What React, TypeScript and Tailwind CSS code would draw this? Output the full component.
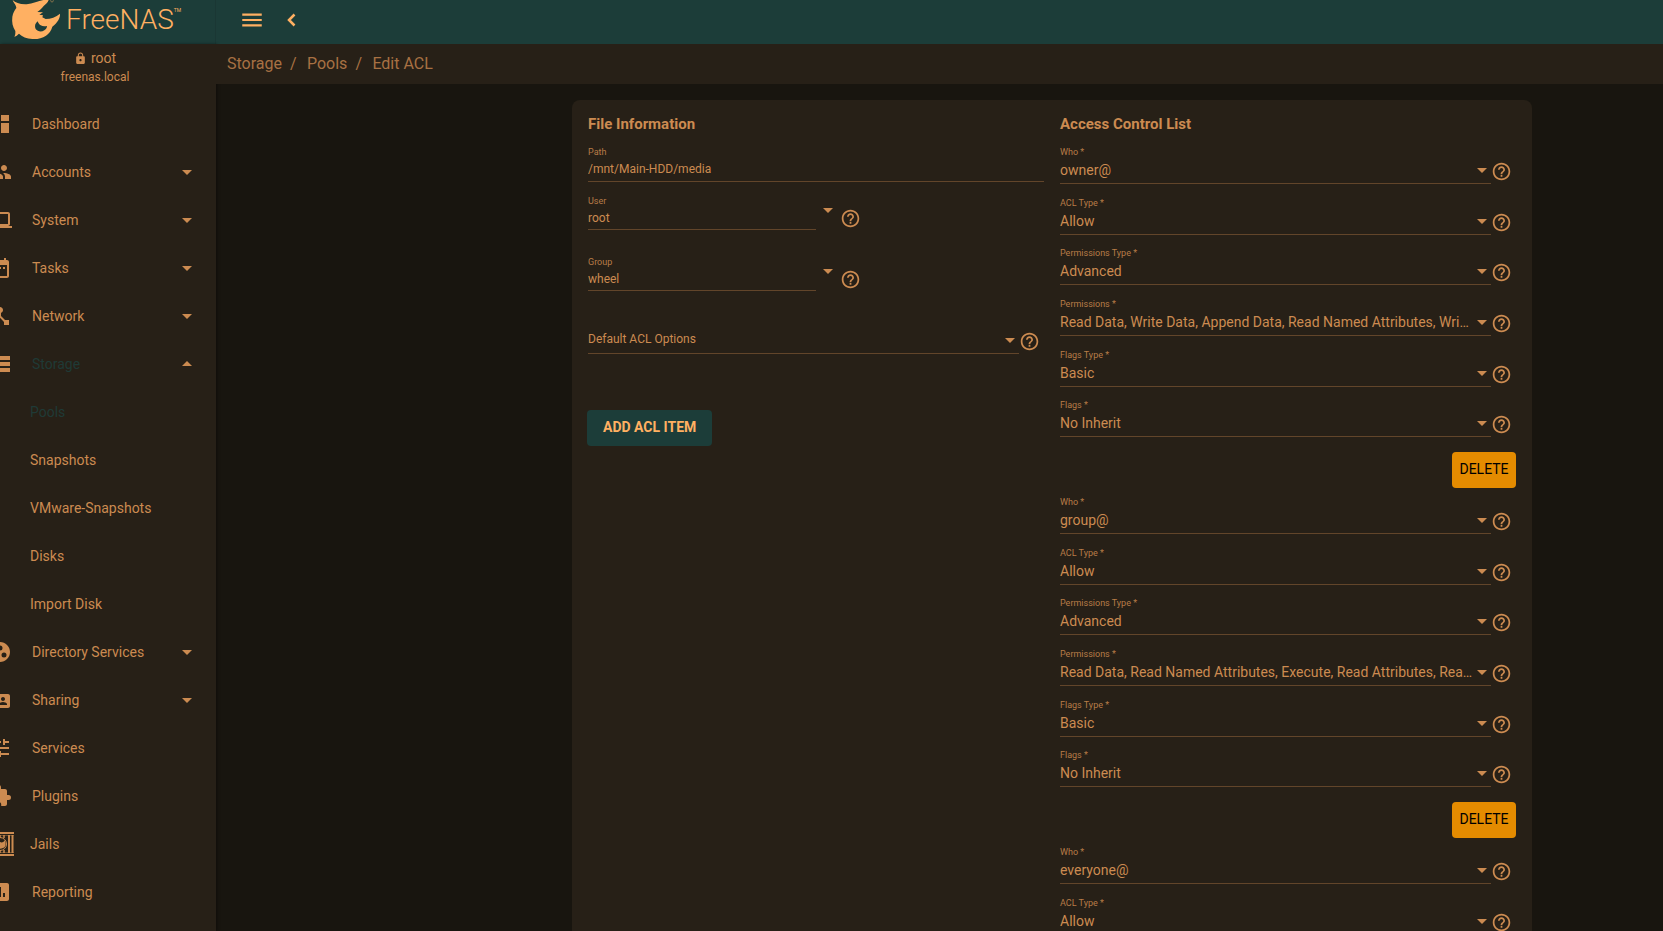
import React, { useState } from 'react';
import {
  MdArrowDropDown,
  MdArrowDropUp,
  MdAssessment,
  MdDashboard,
  MdDateRange,
  MdDeviceHub,
  MdExtension,
  MdFolderShared,
  MdGroupWork,
  MdHelpOutline,
  MdLaptop,
  MdLock,
  MdMenu,
  MdPeople,
  MdStorage,
  MdTune,
} from 'react-icons/md';

const JailIcon = () => (
  <svg viewBox="0 0 28 24" className="w-7 h-6" fill="none" stroke="currentColor">
    <path d="M0 1h28M0 23h28" strokeWidth="2" />
    <path d="M0 3.5h28M0 20.5h28" strokeWidth="1" opacity="0.4" />
    <path d="M2.500 3v18M6 3v18M23 3v18M26.500 3v18" strokeWidth="2" />
    <path d="M10 3v3M14 3v3M18 3v3M10 18v3M14 18v3M18 18v3" strokeWidth="1.5" />
    <circle cx="14" cy="12" r="6.5" strokeWidth="1" />
    <path d="M9 9c2 1 3 0 5 1s4 0 5-2c1 4 1 7-2 8s-6 1-7-1S8 11 9 9z" fill="currentColor" stroke="none" />
  </svg>
);

const Logo = () => (
  <a href="#home" aria-label="FreeNAS" className="flex items-start text-[#ffb062]">
    <svg viewBox="0 0 192 132" className="w-16 h-11 shrink-0" fill="currentColor">
      <path
        fillRule="evenodd"
        d="M38 0C46 8 60 14 80 13C98 10 115 4 130 0H146C143 9 136 13 131 18C126 24 121 30 112 36L129 37L118 44L129 46L127 52L137 57C152 56 168 52 180 41C181 54 172 68 157 80C154 92 147 101 138 107C126 115 112 118 97 117C80 116 66 110 57 101C53 103 50 109 43 110C47 104 46 99 46 93C38 80 35 67 37 50C39 38 44 31 49 24C49 15 41 10 38 0ZM113 64C105 70 103 79 107 87C113 95 124 97 133 91C139 87 141 82 141 78C134 80 127 79 122 76C117 73 115 69 113 64Z"
      />
      <circle cx="156" cy="2" r="4" fill="none" stroke="currentColor" strokeWidth="2" opacity="0.6" />
    </svg>
    <span className="pl-[2px] text-[28px] leading-10 font-light">FreeNAS</span>
    <span className="pt-2 text-[5px] leading-none">TM</span>
  </a>
);

const menu = [
  { label: 'Dashboard', icon: <MdDashboard size={24} /> },
  { label: 'Accounts', icon: <MdPeople size={24} />, expandable: true },
  { label: 'System', icon: <MdLaptop size={24} />, expandable: true },
  { label: 'Tasks', icon: <MdDateRange size={24} />, expandable: true },
  { label: 'Network', icon: <MdDeviceHub size={24} />, expandable: true },
  {
    label: 'Storage',
    icon: <MdStorage size={24} />,
    expandable: true,
    active: true,
    children: ['Pools', 'Snapshots', 'VMware-Snapshots', 'Disks', 'Import Disk'],
  },
  { label: 'Directory Services', icon: <MdGroupWork size={24} />, expandable: true },
  { label: 'Sharing', icon: <MdFolderShared size={24} />, expandable: true },
  { label: 'Services', icon: <MdTune size={24} /> },
  { label: 'Plugins', icon: <MdExtension size={24} /> },
  { label: 'Jails', icon: <JailIcon />, wide: true },
  { label: 'Reporting', icon: <MdAssessment size={24} /> },
];

const aclItems = [
  {
    who: 'owner@',
    permissions: 'Read Data, Write Data, Append Data, Read Named Attributes, Write Named Attributes, Execute',
  },
  {
    who: 'group@',
    permissions: 'Read Data, Read Named Attributes, Execute, Read Attributes, Read ACL, Synchronize',
  },
  {
    who: 'everyone@',
    permissions: 'Read Data, Read Named Attributes, Execute, Read Attributes, Read ACL, Synchronize',
  },
];

const HelpButton = ({ topic }: { topic: string }) => (
  <button type="button" aria-label={`Help: ${topic}`} className="block shrink-0">
    <MdHelpOutline size={21} />
  </button>
);

const SelectField = ({ id, label, value }: { id: string; label: string; value: string }) => (
  <div className="flex items-start">
    <div className="flex-1 min-w-0 border-b border-[#62452a]">
      <label htmlFor={id} className="block text-[9px] leading-3 text-[#b87c47]">
        {label} *
      </label>
      <div className="relative flex h-[25px]">
        <select
          id={id}
          defaultValue={value}
          className="w-full appearance-none bg-transparent pr-[18px] text-sm leading-[25px] truncate outline-none"
        >
          <option>{value}</option>
        </select>
        <MdArrowDropDown size={24} className="absolute right-[-3px] top-0 pointer-events-none" />
      </div>
    </div>
    <div className="w-[25px] pt-[15px]">
      <HelpButton topic={label} />
    </div>
  </div>
);

const AclItem = ({ index, who, permissions }: { index: number; who: string; permissions: string }) => (
  <div className="pb-2">
    <div className="grid grid-rows-6 h-[304px]">
      <SelectField id={`who-${index}`} label="Who" value={who} />
      <SelectField id={`type-${index}`} label="ACL Type" value="Allow" />
      <SelectField id={`perms-type-${index}`} label="Permissions Type" value="Advanced" />
      <SelectField id={`perms-${index}`} label="Permissions" value={permissions} />
      <SelectField id={`flags-type-${index}`} label="Flags Type" value="Basic" />
      <SelectField id={`flags-${index}`} label="Flags" value="No Inherit" />
    </div>
    <div className="flex justify-end pt-[2px]">
      <button type="button" className="h-9 w-16 pb-[2px] rounded bg-[#e48b00] text-sm text-black">
        DELETE
      </button>
    </div>
  </div>
);

const ComboField = ({ id, label, initial }: { id: string; label: string; initial: string }) => {
  const [value, setValue] = useState(initial);

  return (
    <div className="flex items-start h-[61px]">
      <div className="w-1/2 border-b border-[#62452a]">
        <label htmlFor={id} className="block text-[9px] leading-3 text-[#b87c47]">
          {label}
        </label>
        <input
          id={id}
          value={value}
          onChange={(e) => setValue(e.target.value)}
          className="block w-full h-[22px] bg-transparent text-xs outline-none"
        />
      </div>
      <button type="button" aria-label={`Show ${label} options`} className="shrink-0 pt-[3px]">
        <MdArrowDropDown size={24} />
      </button>
      <div className="pt-[13px]">
        <HelpButton topic={label} />
      </div>
    </div>
  );
};

const Sidebar = () => (
  <aside className="w-[216px] shrink-0 overflow-hidden bg-[#272017] shadow-[1px_0_3px_rgba(0,0,0,0.4)]">
    <div className="h-14 pt-[6px] pr-[26px] text-center">
      <div className="flex items-center justify-center gap-1 text-sm leading-4 h-4">
        <MdLock size={13} />
        <span>root</span>
      </div>
      <div className="pt-[3px] text-xs leading-4">freenas.local</div>
    </div>
    <nav>
      {menu.map((item) => (
        <React.Fragment key={item.label}>
          <a href={`#${item.label}`} className="flex items-center h-12 pr-[17px] text-sm">
            <span className={item.wide ? 'w-[30px] -ml-[14px] mr-[14px]' : 'w-8 -ml-3 mr-3'}>{item.icon}</span>
            <span className={`flex-1 ${item.active ? 'text-[#1f3a36]' : ''}`}>{item.label}</span>
            {item.expandable && (item.active ? <MdArrowDropUp size={24} /> : <MdArrowDropDown size={24} />)}
          </a>
          {item.children?.map((child) => (
            <a
              key={child}
              href={`#${child}`}
              className={`flex items-center h-12 pl-[30px] text-sm ${child === 'Pools' ? 'text-[#1f3a36]' : ''}`}
            >
              {child}
            </a>
          ))}
        </React.Fragment>
      ))}
    </nav>
  </aside>
);

const FileInformation = () => (
  <section>
    <h2 className="text-[15px] leading-[18px] font-bold">File Information</h2>
    <div className="mt-[13px] border-b border-[#62452a]">
      <label htmlFor="path" className="block text-[9px] leading-3 text-[#b87c47]">
        Path
      </label>
      <input
        id="path"
        defaultValue="/mnt/Main-HDD/media"
        readOnly
        className="block w-full h-[23px] pb-[2px] bg-transparent text-xs outline-none"
      />
    </div>
    <div className="pt-[13px]">
      <ComboField id="user" label="User" initial="root" />
      <ComboField id="group" label="Group" initial="wheel" />
    </div>
    <div className="flex items-start">
      <div className="relative flex-1 mt-[10px] border-b border-[#62452a]">
        <select
          aria-label="Default ACL Options"
          className="block w-full h-[26px] pb-[2px] appearance-none bg-transparent text-xs outline-none"
        >
          <option>Default ACL Options</option>
        </select>
        <MdArrowDropDown size={24} className="absolute right-[-3px] top-[1px] pointer-events-none" />
      </div>
      <div className="w-[25px] pt-[14px]">
        <HelpButton topic="Default ACL Options" />
      </div>
    </div>
    <button
      type="button"
      className="block mt-14 -ml-px h-9 px-4 pb-[2px] rounded bg-[#1c3d39] text-sm font-bold text-[#ffb062]"
    >
      ADD ACL ITEM
    </button>
  </section>
);

export default function App() {
  return (
    <div className="flex flex-col h-screen overflow-hidden bg-[#18150f] text-[#cc8b51] font-[Roboto,sans-serif]">
      <header className="flex items-center h-11 shrink-0 bg-[#1c3d39] text-[#ffb062]">
        <div className="w-[216px] h-11 shrink-0 border-r border-[#1a3734]">
          <Logo />
        </div>
        <button type="button" aria-label="Toggle menu" className="ml-[23px] -mt-1">
          <MdMenu size={26} />
        </button>
        <button type="button" aria-label="Collapse" className="ml-[14px] -mt-1">
          <svg viewBox="0 0 24 24" className="w-6 h-6" fill="none" stroke="currentColor" strokeWidth="2.5">
            <path d="M15.500 6.500L10 12l5.500 5.500" />
          </svg>
        </button>
      </header>

      <div className="flex flex-1 min-h-0">
        <Sidebar />
        <div className="flex-1 min-w-0 flex flex-col">
          <nav aria-label="Breadcrumb" className="flex items-center h-10 shrink-0 pl-[11px] bg-[#272017] text-[#a87143]">
            <a href="#storage">Storage</a>
            <span className="w-[25px] pl-2">/</span>
            <a href="#pools">Pools</a>
            <span className="w-[25px] pl-2">/</span>
            <span>Edit ACL</span>
          </nav>
          <main className="flex-1 min-h-0 overflow-y-auto [scrollbar-width:none] pt-4 pl-[225px]">
            <form className="grid grid-cols-2 gap-4 w-full max-w-[960px] mx-auto px-4 py-[15px] rounded-lg bg-[#272017]">
              <FileInformation />
              <section>
                <h2 className="text-[15px] leading-[18px] font-bold mb-[13px]">Access Control List</h2>
                {aclItems.map((item, i) => (
                  <AclItem key={item.who} index={i} {...item} />
                ))}
              </section>
            </form>
          </main>
        </div>
      </div>
    </div>
  );
}
